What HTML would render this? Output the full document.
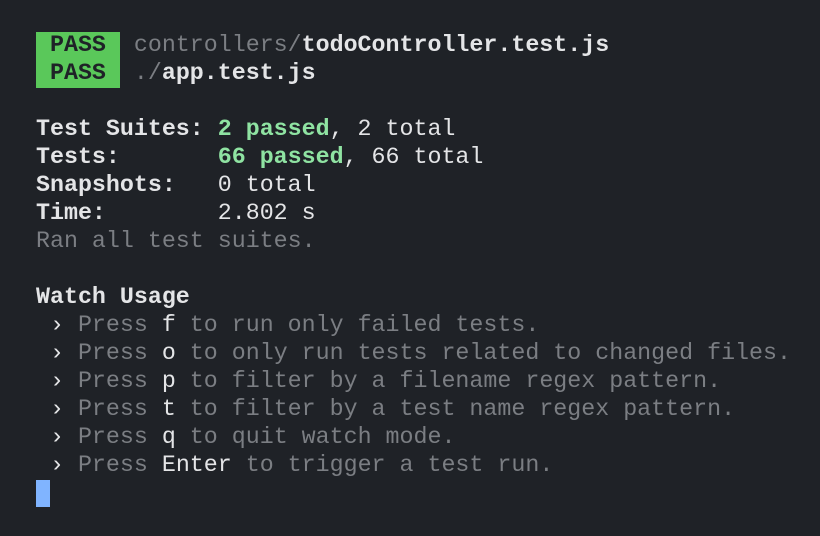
<!DOCTYPE html>
<html><head><meta charset="utf-8"><style>
html,body{margin:0;padding:0}
body{width:820px;height:536px;background:#1f2227;overflow:hidden;position:relative;font-family:"Liberation Mono","DejaVu Sans Mono",monospace;font-size:23.3px;color:#7b7e83}
.l{position:absolute;left:36px;height:28px;line-height:28px;white-space:pre}
.w{color:#e4e5e7}
.b{font-weight:bold;color:#e4e5e7}
.g{font-weight:bold;color:#8fe3a2}
.pass{position:absolute;left:36px;top:32px;width:84px;height:56px;background:#5ac85a}
.pt{color:#1f2227;font-weight:bold}
.cur{position:absolute;left:36px;top:480px;width:14px;height:27px;background:#80b4ff}
</style></head><body>
<div class="pass"></div>
<div class="l" style="top:31px"><span class="pt"> PASS </span> controllers/<span class="b">todoController.test.js</span></div>
<div class="l" style="top:59px"><span class="pt"> PASS </span> ./<span class="b">app.test.js</span></div>
<div class="l w" style="top:115px"><span class="b">Test Suites: </span><span class="g">2 passed</span>, 2 total</div>
<div class="l w" style="top:143px"><span class="b">Tests:       </span><span class="g">66 passed</span>, 66 total</div>
<div class="l w" style="top:171px"><span class="b">Snapshots:   </span>0 total</div>
<div class="l w" style="top:199px"><span class="b">Time:        </span>2.802 s</div>
<div class="l" style="top:227px">Ran all test suites.</div>
<div class="l b" style="top:283px">Watch Usage</div>
<div class="l" style="top:311px"><span class="w"> ›</span> Press <span class="w">f</span> to run only failed tests.</div>
<div class="l" style="top:339px"><span class="w"> ›</span> Press <span class="w">o</span> to only run tests related to changed files.</div>
<div class="l" style="top:367px"><span class="w"> ›</span> Press <span class="w">p</span> to filter by a filename regex pattern.</div>
<div class="l" style="top:395px"><span class="w"> ›</span> Press <span class="w">t</span> to filter by a test name regex pattern.</div>
<div class="l" style="top:423px"><span class="w"> ›</span> Press <span class="w">q</span> to quit watch mode.</div>
<div class="l" style="top:451px"><span class="w"> ›</span> Press <span class="w">Enter</span> to trigger a test run.</div>
<div class="cur"></div>
</body></html>
